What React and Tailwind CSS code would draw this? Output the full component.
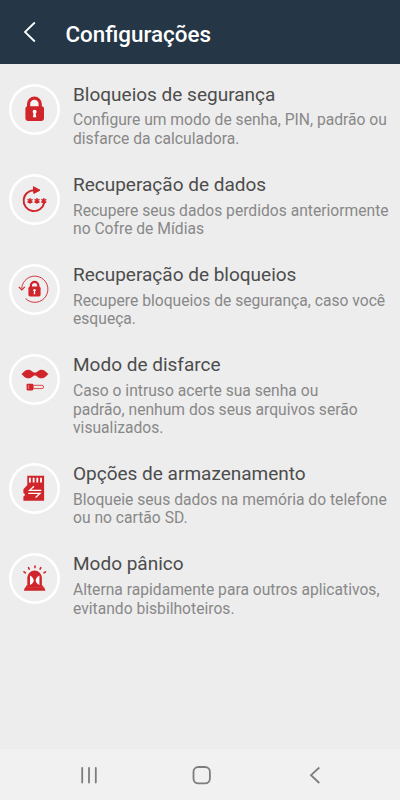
const RED = '#d0252b'

function LockIcon() {
  return (
    <svg viewBox="0 0 50 50" className="h-full w-full">
      <path d="M19.6 24v-4.1a5.8 5.8 0 0 1 11.6 0V24" fill="#f8f4f4" stroke={RED} strokeWidth="3.2" />
      <rect x="16.4" y="22.2" width="18.6" height="14.8" rx="2.4" fill={RED} />
      <circle cx="25.6" cy="27.7" r="2" fill="#fff" />
      <path d="M24.8 28h1.6l.9 5.2h-3.4z" fill="#fff" />
    </svg>
  )
}

function Asterisk({ x }) {
  return (
    <path
      d="M0-2.9V2.9M-2.5-1.5L2.5 1.5M-2.5 1.5L2.5-1.5"
      transform={`translate(${x} 26.9)`}
      stroke={RED}
      strokeWidth="1.3"
    />
  )
}

function DataRecoveryIcon() {
  return (
    <svg viewBox="0 0 50 50" className="h-full w-full">
      <path d="M25.6 16.3a10.4 10.4 0 1 0 9.6 12.5" fill="none" stroke={RED} strokeWidth="1.9" />
      <path d="M24.4 12.7L31 16.2L24.8 19.4z" fill={RED} stroke={RED} strokeWidth="1" strokeLinejoin="round" />
      <Asterisk x={21} />
      <Asterisk x={28} />
      <Asterisk x={34.8} />
    </svg>
  )
}

function LockRecoveryIcon() {
  return (
    <svg viewBox="0 0 50 50" className="h-full w-full">
      <path d="M12.7 24.5A13.1 13.1 0 1 1 16.6 34.6" fill="none" stroke={RED} strokeWidth="0.9" />
      <path d="M9.8 22.8L12.8 25.9L15.8 22.8" fill="none" stroke={RED} strokeWidth="1.2" />
      <path d="M21.9 24v-2.4a3.7 3.7 0 0 1 7.4 0V24" fill="none" stroke={RED} strokeWidth="2.2" />
      <rect x="19.4" y="22.6" width="12.2" height="9.8" rx="1.6" fill={RED} />
      <circle cx="25.5" cy="26.2" r="1.2" fill="#fff" />
      <path d="M25 26.3h1l.3 3.9h-1.6z" fill="#fff" />
    </svg>
  )
}

function DisguiseIcon() {
  return (
    <svg viewBox="0 0 50 50" className="h-full w-full">
      <path
        d="M12.4 19.9C13.8 19.4 15.6 15.7 19.3 15.7C22.6 15.7 23.6 18.6 25.9 18.6C28.2 18.6 29.2 15.7 32.5 15.7C36.2 15.7 38 19.4 39.6 19.9C38 20.8 36.2 24.3 32.4 24.3C29 24.3 28.2 21.4 25.9 21.4C23.6 21.4 22.8 24.3 19.4 24.3C15.6 24.3 13.8 20.8 12.4 19.9z"
        fill={RED}
      />
      <rect x="17.6" y="29.7" width="6.6" height="6.7" rx="0.8" fill={RED} />
      <path d="M19.6 31v4" stroke="#f0a9aa" strokeWidth="0.7" />
      <path d="M24.2 31.3h8.7a1.6 1.6 0 0 1 0 3.3h-8.7z" fill="#f7e8e8" stroke={RED} strokeWidth="0.8" />
    </svg>
  )
}

function StorageIcon() {
  return (
    <svg viewBox="0 0 50 50" className="h-full w-full">
      <path d="M18.3 12.7h16.8v25H14.4v-4.2l1.4-1v-1.6l-1.4-.8v-3.9l3.9-4.1z" fill={RED} />
      <path d="M20.9 14.7v4.9M24.6 14.7v4.9M28.3 14.7v4.9M32 14.7v4.9" stroke="#fff" strokeWidth="1.8" />
      <path d="M32.4 27.4H20.6l4.4-4.2M19.2 30.3h11.8l-4.4 4.2" fill="none" stroke="#fff" strokeWidth="1.3" />
    </svg>
  )
}

function PanicIcon() {
  return (
    <svg viewBox="0 0 50 50" className="h-full w-full">
      <path d="M18.3 33.5V24.8a7.3 7.3 0 0 1 14.6 0v8.7z" fill={RED} />
      <path d="M21 22.4c2.8 1.4 3.7 3.4 3.7 4.8s-.9 3.4-3.7 4.8zM30.4 22.4c-2.8 1.4-3.7 3.4-3.7 4.8s.9 3.4 3.7 4.8z" fill="#fff" />
      <rect x="17" y="32.6" width="17.2" height="2" fill={RED} />
      <path d="M16 34.2h19.2l1.2 3.6H14.9z" fill={RED} />
      <path d="M15 18.8l1.4 1M19.5 14.7l.7 1.4M26 13v1.6M31.8 14.7l-.7 1.4M36.4 18.8l-1.4 1" stroke={RED} strokeWidth="1.6" strokeLinecap="round" />
    </svg>
  )
}

const items = [
  { icon: LockIcon, title: 'Bloqueios de segurança', lines: ['Configure um modo de senha, PIN, padrão ou', 'disfarce da calculadora.'] },
  { icon: DataRecoveryIcon, title: 'Recuperação de dados', lines: ['Recupere seus dados perdidos anteriormente', 'no Cofre de Mídias'] },
  { icon: LockRecoveryIcon, title: 'Recuperação de bloqueios', lines: ['Recupere bloqueios de segurança, caso você', 'esqueça.'] },
  { icon: DisguiseIcon, title: 'Modo de disfarce', lines: ['Caso o intruso acerte sua senha ou', 'padrão, nenhum dos seus arquivos serão', 'visualizados.'] },
  { icon: StorageIcon, title: 'Opções de armazenamento', lines: ['Bloqueie seus dados na memória do telefone', 'ou no cartão SD.'] },
  { icon: PanicIcon, title: 'Modo pânico', lines: ['Alterna rapidamente para outros aplicativos,', 'evitando bisbilhoteiros.'] },
]

function SettingRow({ item }) {
  const Icon = item.icon
  return (
    <li className="flex items-start">
      <div className="mt-[1px] mr-[13px] h-[51px] w-[51px] shrink-0 rounded-full bg-[#eeeeee] shadow-[inset_0_0_0_2.6px_#fff]">
        <div className="h-[50px] w-[50px]">
          <Icon />
        </div>
      </div>
      <div className="whitespace-nowrap">
        <h2 className="text-[19px] leading-[24px] text-[#4c4c4c]">{item.title}</h2>
        <p className="mt-[4.6px] text-[15.65px] leading-[18.6px] text-[#888888]">
          {item.lines.map(line => (
            <span key={line} className="block">{line}</span>
          ))}
        </p>
      </div>
    </li>
  )
}

export default function App() {
  return (
    <div className="flex h-screen w-full flex-col overflow-hidden bg-[#ededed] font-['Roboto',sans-serif]">
      <header className="flex h-[64px] shrink-0 items-center bg-[#253746] pl-[23px]">
        <svg viewBox="0 0 14 22" className="h-[22px] w-[14px]" fill="none" stroke="#fff" strokeWidth="1.8">
          <path d="M11.8 1.5L2 11L11.8 20.5" />
        </svg>
        <h1 className="mt-[3px] ml-[28.5px] text-[22.4px] leading-[28px] font-medium text-white">Configurações</h1>
      </header>

      <ul className="flex flex-1 flex-col gap-[24.4px] pt-[18.9px] pl-[9px]">
        {items.map(item => <SettingRow key={item.title} item={item} />)}
      </ul>

      {/* System navigation */}
      <nav className="flex h-[51px] shrink-0 items-center bg-[#f1f1f1] pl-[79px] text-[#7d7d7d]">
        <svg viewBox="0 0 20 20" className="h-5 w-5" stroke="currentColor" strokeWidth="1.8" strokeLinecap="round">
          <path d="M3.2 3v14.5M10 3v14.5M16.8 3v14.5" />
        </svg>
        <svg viewBox="0 0 20 20" className="ml-[93px] h-5 w-5" fill="none" stroke="currentColor" strokeWidth="1.8">
          <rect x="1.5" y="2" width="16.4" height="16.4" rx="4.8" />
        </svg>
        <svg viewBox="0 0 14 20" className="ml-[96px] h-5 w-[14px]" fill="none" stroke="currentColor" strokeWidth="1.8">
          <path d="M11.3 2.5L3 10.2L11.3 18" />
        </svg>
      </nav>
    </div>
  )
}
